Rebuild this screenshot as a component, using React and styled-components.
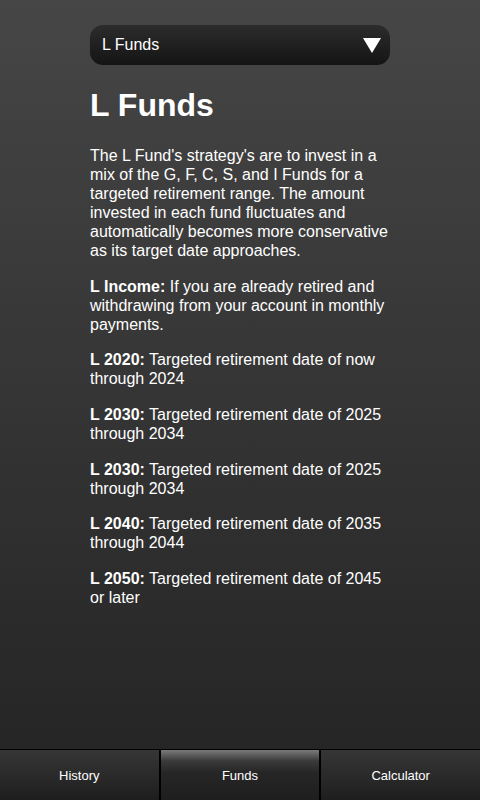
import React from 'react';
import styled, { createGlobalStyle } from 'styled-components';

const GlobalStyle = createGlobalStyle`
  html, body {
    margin: 0;
    padding: 0;
    height: 100%;
  }
  body {
    font-family: "Liberation Sans", Arial, sans-serif;
    color: #fff;
    background: #2a2a2a;
  }
  #root {
    height: 100%;
  }
`;

const Screen = styled.div`
  height: 800px;
  display: flex;
  flex-direction: column;
  background: linear-gradient(to bottom, #464646 0%, #232323 100%);
`;

const Content = styled.div`
  flex: 1;
  width: 300px;
  margin: 0 auto;
  padding-top: 25px;
`;

const Select = styled.div`
  height: 40px;
  border-radius: 13px;
  background: linear-gradient(to bottom, #2c2c2c 0%, #141414 100%);
  display: flex;
  align-items: center;
  justify-content: space-between;
  padding: 0 9px 0 12px;
  font-size: 16px;
`;

const Title = styled.h1`
  margin: 21px 0 0;
  font-size: 32px;
  line-height: 38px;
  font-weight: bold;
`;

const Para = styled.p`
  margin: ${p => (p.$first ? '22px' : '16.7px')} 0 0;
  font-size: 16px;
  line-height: 19px;

  b {
    font-weight: bold;
  }
`;

const TabBar = styled.div`
  height: 50px;
  display: grid;
  grid-template-columns: 1fr 1fr 1fr;
  border-top: 1px solid #000;
  background: #000;
  gap: 2px;
`;

const Tab = styled.div`
  display: flex;
  align-items: center;
  justify-content: center;
  font-size: 13px;
  background: ${p =>
    p.$active
      ? 'linear-gradient(to bottom, #7a7a7a 0%, #3a3a3a 22%, #262626 45%, #1e1e1e 100%)'
      : 'linear-gradient(to bottom, #363636 0%, #1e1e1e 100%)'};
`;

const Arrow = () => (
  <svg width="18" height="15" viewBox="0 0 18 15">
    <polygon points="0,0 18,0 9,15" fill="#fff" />
  </svg>
);

const funds = [
  ['L 2020:', 'Targeted retirement date of now through 2024'],
  ['L 2030:', 'Targeted retirement date of 2025 through 2034'],
  ['L 2030:', 'Targeted retirement date of 2025 through 2034'],
  ['L 2040:', 'Targeted retirement date of 2035 through 2044'],
  ['L 2050:', 'Targeted retirement date of 2045 or later'],
];

export default function App() {
  return (
    <Screen>
      <GlobalStyle />
      <Content>
        <Select>
          <span>L Funds</span>
          <Arrow />
        </Select>
        <Title>L Funds</Title>
        <Para $first>
          The L Fund's strategy's are to invest in a mix of the G, F, C, S, and I Funds
          for a targeted retirement range. The amount invested in each fund fluctuates
          and automatically becomes more conservative as its target date approaches.
        </Para>
        <Para>
          <b>L Income:</b> If you are already retired and withdrawing from your account in
          monthly payments.
        </Para>
        {funds.map(([name, text], i) => (
          <Para key={i}>
            <b>{name}</b> {text}
          </Para>
        ))}
      </Content>
      <TabBar>
        <Tab>History</Tab>
        <Tab $active>Funds</Tab>
        <Tab>Calculator</Tab>
      </TabBar>
    </Screen>
  );
}
